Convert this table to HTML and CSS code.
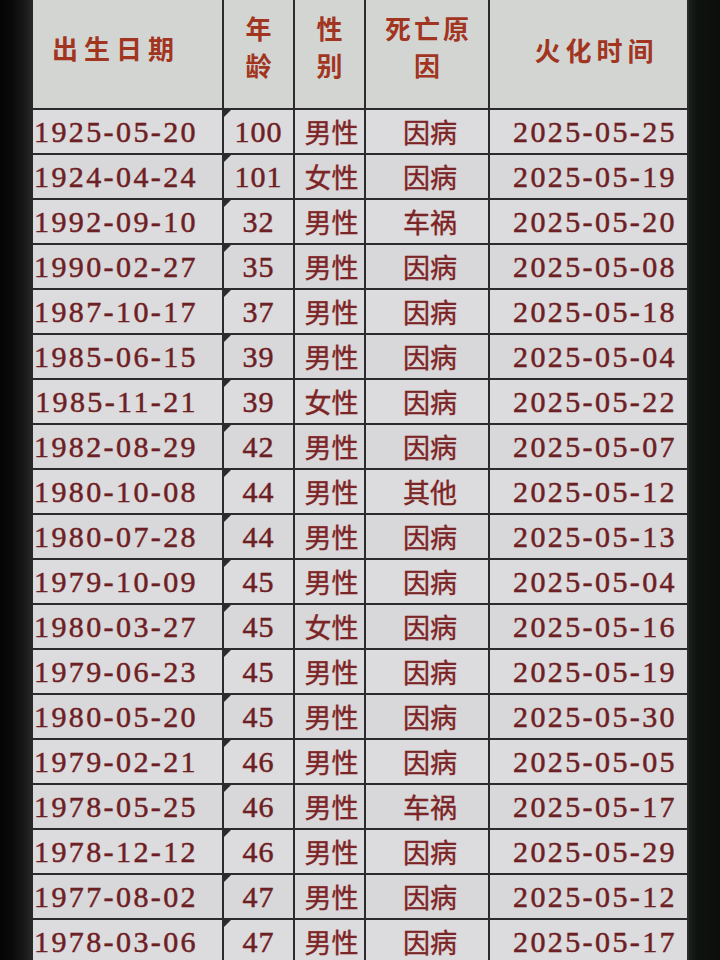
FILE: index.html
```html
<!DOCTYPE html>
<html lang="zh">
<head>
<meta charset="utf-8">
<title>火化记录</title>
<link rel="stylesheet" href="styles.css">
</head>
<body>
<div class="screen">
  <div class="bezel-left"></div>
  <table class="sheet">
    <colgroup>
      <col class="c-date"><col class="c-age"><col class="c-sex"><col class="c-cause"><col class="c-time">
    </colgroup>
    <thead>
      <tr>
        <th class="h-date">出生日期</th>
        <th class="h-two">年<br>龄</th>
        <th class="h-two">性<br>别</th>
        <th class="h-two">死亡原<br>因</th>
        <th class="h-time">火化时间</th>
      </tr>
    </thead>
    <tbody>
      <tr><td class="d-date">1925-05-20</td><td class="d-age">100</td><td class="d-cn">男性</td><td class="d-cause">因病</td><td class="d-time">2025-05-25</td></tr>
      <tr><td class="d-date">1924-04-24</td><td class="d-age">101</td><td class="d-cn">女性</td><td class="d-cause">因病</td><td class="d-time">2025-05-19</td></tr>
      <tr><td class="d-date">1992-09-10</td><td class="d-age">32</td><td class="d-cn">男性</td><td class="d-cause">车祸</td><td class="d-time">2025-05-20</td></tr>
      <tr><td class="d-date">1990-02-27</td><td class="d-age">35</td><td class="d-cn">男性</td><td class="d-cause">因病</td><td class="d-time">2025-05-08</td></tr>
      <tr><td class="d-date">1987-10-17</td><td class="d-age">37</td><td class="d-cn">男性</td><td class="d-cause">因病</td><td class="d-time">2025-05-18</td></tr>
      <tr><td class="d-date">1985-06-15</td><td class="d-age">39</td><td class="d-cn">男性</td><td class="d-cause">因病</td><td class="d-time">2025-05-04</td></tr>
      <tr><td class="d-date">1985-11-21</td><td class="d-age">39</td><td class="d-cn">女性</td><td class="d-cause">因病</td><td class="d-time">2025-05-22</td></tr>
      <tr><td class="d-date">1982-08-29</td><td class="d-age">42</td><td class="d-cn">男性</td><td class="d-cause">因病</td><td class="d-time">2025-05-07</td></tr>
      <tr><td class="d-date">1980-10-08</td><td class="d-age">44</td><td class="d-cn">男性</td><td class="d-cause">其他</td><td class="d-time">2025-05-12</td></tr>
      <tr><td class="d-date">1980-07-28</td><td class="d-age">44</td><td class="d-cn">男性</td><td class="d-cause">因病</td><td class="d-time">2025-05-13</td></tr>
      <tr><td class="d-date">1979-10-09</td><td class="d-age">45</td><td class="d-cn">男性</td><td class="d-cause">因病</td><td class="d-time">2025-05-04</td></tr>
      <tr><td class="d-date">1980-03-27</td><td class="d-age">45</td><td class="d-cn">女性</td><td class="d-cause">因病</td><td class="d-time">2025-05-16</td></tr>
      <tr><td class="d-date">1979-06-23</td><td class="d-age">45</td><td class="d-cn">男性</td><td class="d-cause">因病</td><td class="d-time">2025-05-19</td></tr>
      <tr><td class="d-date">1980-05-20</td><td class="d-age">45</td><td class="d-cn">男性</td><td class="d-cause">因病</td><td class="d-time">2025-05-30</td></tr>
      <tr><td class="d-date">1979-02-21</td><td class="d-age">46</td><td class="d-cn">男性</td><td class="d-cause">因病</td><td class="d-time">2025-05-05</td></tr>
      <tr><td class="d-date">1978-05-25</td><td class="d-age">46</td><td class="d-cn">男性</td><td class="d-cause">车祸</td><td class="d-time">2025-05-17</td></tr>
      <tr><td class="d-date">1978-12-12</td><td class="d-age">46</td><td class="d-cn">男性</td><td class="d-cause">因病</td><td class="d-time">2025-05-29</td></tr>
      <tr><td class="d-date">1977-08-02</td><td class="d-age">47</td><td class="d-cn">男性</td><td class="d-cause">因病</td><td class="d-time">2025-05-12</td></tr>
      <tr><td class="d-date">1978-03-06</td><td class="d-age">47</td><td class="d-cn">男性</td><td class="d-cause">因病</td><td class="d-time">2025-05-17</td></tr>
    </tbody>
  </table>
  <div class="bezel-right"></div>
</div>
</body>
</html>
```

FILE: styles.css
```css
html, body {
  margin: 0;
  padding: 0;
  background: #0b0d0b;
  width: 720px;
  height: 960px;
  overflow: hidden;
}

.screen {
  display: flex;
  width: 720px;
  height: 960px;
  overflow: hidden;
}

.bezel-left {
  flex: 0 0 33px;
  background: linear-gradient(to right, #040404 0px, #0a0a0a 12px, #1b1b1b 26px, #2a2a2a 33px);
}

.bezel-right {
  flex: 0 0 32px;
  background: linear-gradient(to right, #1c201c 0px, #0f130f 8px, #0a0d0a 32px);
}

.sheet {
  flex: 0 0 655px;
  width: 655px;
  table-layout: fixed;
  border-collapse: collapse;
  background: #dadadc;
  align-self: flex-start;
}

.c-date { width: 190px; }
.c-age { width: 71px; }
.c-sex { width: 71px; }
.c-cause { width: 124px; }
.c-time { width: 199px; }

.sheet th,
.sheet td {
  border: 2px solid #2b2b2d;
  padding: 0;
  overflow: hidden;
  white-space: nowrap;
}

.sheet th:first-child,
.sheet td:first-child {
  border-left: none;
}

.sheet th {
  height: 109px;
  border-top: none;
  background: #d3d5d3;
  color: #a1351f;
  font-family: "Noto Sans CJK SC", "Noto Sans", sans-serif;
  font-weight: 700;
  font-size: 26px;
  letter-spacing: 4px;
  line-height: 37px;
  text-align: center;
  vertical-align: middle;
  padding-bottom: 16px;
  box-sizing: border-box;
}

.sheet .h-two {
  letter-spacing: 3px;
  padding-left: 3px;
}

.sheet .h-date {
  text-align: left;
  padding-left: 19px;
  letter-spacing: 6px;
  padding-bottom: 14px;
}

.sheet .h-time {
  padding-left: 16px;
  letter-spacing: 5px;
  padding-bottom: 10px;
}

.sheet td {
  height: 43px;
  color: #6a2126;
  font-family: "Liberation Serif", "Noto Sans CJK SC", serif;
  font-size: 30px;
  line-height: 43px;
  letter-spacing: 2.4px;
  vertical-align: middle;
  -webkit-text-stroke: 0.4px #6a2126;
  text-shadow: 0 0 1px rgba(230, 120, 110, 0.55);
}

.sheet tbody tr:nth-child(odd) td {
  background: #dcdbdd;
}

.sheet tbody tr:nth-child(even) td {
  background: #d8d8da;
}

.sheet .d-date {
  text-align: right;
  padding-right: 24px;
}

.sheet .d-age {
  position: relative;
  text-align: center;
  letter-spacing: 1px;
}

.d-age::before {
  content: "";
  position: absolute;
  left: 0;
  top: 0;
  width: 0;
  height: 0;
  border-top: 7px solid #2b2b2d;
  border-right: 7px solid transparent;
}

.sheet .d-cn,
.sheet .d-cause {
  font-family: "Noto Sans CJK SC", sans-serif;
  font-weight: 400;
  font-size: 27px;
  letter-spacing: 0;
  text-align: center;
  color: #7a2628;
  -webkit-text-stroke: 0.3px #7a2628;
}

.sheet .d-cn {
  padding-left: 4px;
}

.sheet .d-cause {
  padding-left: 6px;
}

.sheet .d-time {
  text-align: right;
  padding-right: 10px;
}
```
